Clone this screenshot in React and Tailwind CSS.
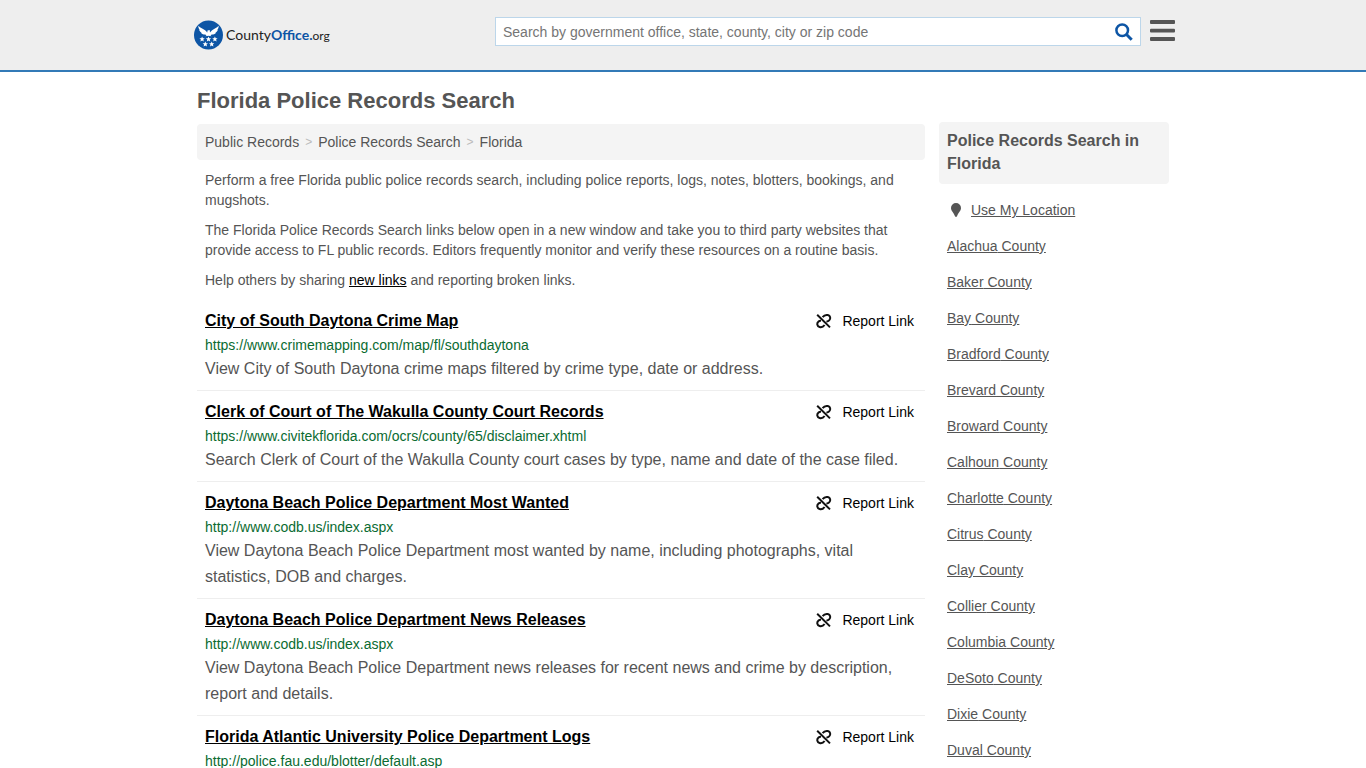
const results = [
  { title: 'City of South Daytona Crime Map', url: 'https://www.crimemapping.com/map/fl/southdaytona', text: 'View City of South Daytona crime maps filtered by crime type, date or address.' },
  { title: 'Clerk of Court of The Wakulla County Court Records', url: 'https://www.civitekflorida.com/ocrs/county/65/disclaimer.xhtml', text: 'Search Clerk of Court of the Wakulla County court cases by type, name and date of the case filed.' },
  { title: 'Daytona Beach Police Department Most Wanted', url: 'http://www.codb.us/index.aspx', text: 'View Daytona Beach Police Department most wanted by name, including photographs, vital statistics, DOB and charges.' },
  { title: 'Daytona Beach Police Department News Releases', url: 'http://www.codb.us/index.aspx', text: 'View Daytona Beach Police Department news releases for recent news and crime by description, report and details.' },
  { title: 'Florida Atlantic University Police Department Logs', url: 'http://police.fau.edu/blotter/default.asp', text: '' },
];

const counties = ['Alachua', 'Baker', 'Bay', 'Bradford', 'Brevard', 'Broward', 'Calhoun', 'Charlotte', 'Citrus', 'Clay', 'Collier', 'Columbia', 'DeSoto', 'Dixie', 'Duval'];

const star = 'M0 -2.8L0.8 -0.9L2.7 -0.9L1.2 0.4L1.7 2.3L0 1.2L-1.7 2.3L-1.2 0.4L-2.7 -0.9L-0.8 -0.9Z';
const stars = [[8.6, 19.2], [15, 19.2], [21.4, 19.2], [11.8, 24.2], [18.2, 24.2]];

function Logo() {
  return (
    <a href="#home" className="flex items-center gap-[2px]">
      <svg viewBox="0 0 30 30" className="size-[30px]" aria-hidden="true">
        <circle cx="14.5" cy="15" r="14.5" fill="#0d55a5" />
        <g transform="translate(-0.5 0)" fill="#fff">
          <path d="M4.8 5.8C7 8 9.5 8.8 11.6 10.2C12.8 11 13.3 12 13.8 12.6L14 10.6L16.2 10.1L16.5 12.6C17 11.8 17.6 10.900 18.6 10.200C20.7 8.8 23 8 25.2 5.8C25.2 8 24.5 9.2 23.8 9.9L24.3 10.1C23.6 11.8 22.8 12.3 22 12.6L22.4 12.9C21.2 14.2 20 14.4 18.4 14.5L17 15.3L18 16.3L15 15.7L12 16.3L13 15.3L11.6 14.5C10 14.4 8.8 14.2 7.6 12.9L8 12.6C7.2 12.3 6.4 11.8 5.7 10.1L6.2 9.9C5.5 9.2 4.8 8 4.8 5.8Z" />
          {stars.map(([x, y]) => (
            <path key={`${x}-${y}`} d={star} transform={`translate(${x} ${y})`} />
          ))}
        </g>
      </svg>
      <span className="font-['Lato',sans-serif] text-[14px] leading-5 text-[#222]">
        County<b className="font-bold text-[#0d55a5]">Office.</b><span className="text-[12px]">org</span>
      </span>
    </a>
  );
}

function BrokenLinkIcon() {
  return (
    <svg viewBox="0 0 16 16" className="size-4" fill="none" stroke="#111" strokeWidth="2" aria-hidden="true">
      <path d="M1.2 1.8L14 14.4" />
      <path d="M6.6 4.2C7.8 2.5 9.8 1.6 11.8 2C14.4 2.600 15 5.6 13.2 7.4C12.400 8.200 11.500 8.500 10.400 8.400" />
      <path d="M8.6 12C7.4 13.7 5.5 14.5 3.6 14C1.1 13.3 0.6 10.4 2.300 8.800C3.100 8 4 7.700 5 7.800" />
    </svg>
  );
}

function Result({ title, url, text }) {
  return (
    <li className="border-b border-[#eee] px-2 pt-[7px] pb-2">
      <div className="flex items-center justify-between pr-[3px]">
        <h2 className="text-base leading-7 font-bold text-black">
          <a href="#result" className="underline">{title}</a>
        </h2>
        <button type="button" className="flex items-center gap-[10px] text-sm leading-5 text-black">
          <BrokenLinkIcon />
          Report Link
        </button>
      </div>
      <p className="text-sm leading-5 text-[#0a6b31]">{url}</p>
      <p className="mt-px text-base leading-[26px] text-[#555]">{text}</p>
    </li>
  );
}

export default function App() {
  return (
    <div className="h-screen overflow-hidden bg-white font-['Liberation_Sans',Arial,sans-serif] text-sm text-[#555]">
      <header className="border-b-2 border-[#337ab7] bg-[#eee]">
        <div className="mx-auto flex h-[70px] max-w-[984px] items-start justify-between pl-[3px]">
          <div className="pt-5"><Logo /></div>
          <div className="flex pt-[17px]">
            <form className="flex h-[29px] w-[646px] items-center border border-[#bcd6ea] bg-white px-[7px]" onSubmit={(e) => e.preventDefault()}>
              <input type="text" aria-label="Search" placeholder="Search by government office, state, county, city or zip code" className="min-w-0 flex-1 bg-transparent text-sm outline-none placeholder:text-[#757575]" />
              <button type="submit" aria-label="Submit search">
                <svg viewBox="0 0 18 18" className="size-[18px]" fill="none" stroke="#0d55a5" aria-hidden="true">
                  <circle cx="7.2" cy="7.2" r="5.8" strokeWidth="2.5" />
                  <path d="M11.5 11.5L16.7 16.7" strokeWidth="3" />
                </svg>
              </button>
            </form>
            <button type="button" aria-label="Menu" className="ml-[9px] flex h-[29px] pt-[3px]">
              <svg viewBox="0 0 25 22" className="h-[22px] w-[25px]" fill="#555" aria-hidden="true">
                <rect width="25" height="4" rx="1" />
                <rect y="8.7" width="25" height="3.7" rx="1" />
                <rect y="17" width="25" height="4" rx="1" />
              </svg>
            </button>
          </div>
        </div>
      </header>
      <div className="mx-auto flex max-w-[972px] items-start gap-[14px]">
        <main className="min-w-0 flex-1">
          <h1 className="pt-[13px] text-[22px] leading-8 font-bold">Florida Police Records Search</h1>
          <nav aria-label="Breadcrumb" className="mt-[7px] flex gap-[6px] rounded bg-[#f4f4f4] p-2 leading-5">
            <a href="#records">Public Records</a>
            <span className="text-xs leading-5 text-[#bbb]">&gt;</span>
            <a href="#police">Police Records Search</a>
            <span className="text-xs leading-5 text-[#bbb]">&gt;</span>
            <a href="#florida">Florida</a>
          </nav>
          <div className="flex flex-col gap-[10px] px-2 pt-[10px] leading-5">
            <p>Perform a free Florida public police records search, including police reports, logs, notes, blotters, bookings, and mugshots.</p>
            <p>The Florida Police Records Search links below open in a new window and take you to third party websites that provide access to FL public records. Editors frequently monitor and verify these resources on a routine basis.</p>
            <p>Help others by sharing <a href="#new" className="text-black underline">new links</a> and reporting broken links.</p>
          </div>
          <ul className="mt-[10px]">
            {results.map((r) => <Result key={r.title} {...r} />)}
          </ul>
        </main>
        <aside className="w-[230px] pt-[50px]">
          <h2 className="rounded bg-[#f4f4f4] px-2 pt-[7px] pb-[9px] text-base leading-[23px] font-bold">Police Records Search in Florida</h2>
          <ul className="flex flex-col gap-4 px-2 pt-4 leading-5">
            <li className="flex items-center">
              <svg viewBox="0 0 10 14" className="mr-[10px] ml-1 h-[14px] w-[10px]" fill="#555" aria-hidden="true">
                <path d="M5 0A5 5 0 0 0 0 5C0 8 2.7 9.6 4 13.2Q5 14.8 6 13.2C7.3 9.6 10 8 10 5A5 5 0 0 0 5 0Z" />
              </svg>
              <a href="#location" className="underline">Use My Location</a>
            </li>
            {counties.map((c) => <li key={c}><a href="#county" className="underline">{c} County</a></li>)}
          </ul>
        </aside>
      </div>
    </div>
  );
}
